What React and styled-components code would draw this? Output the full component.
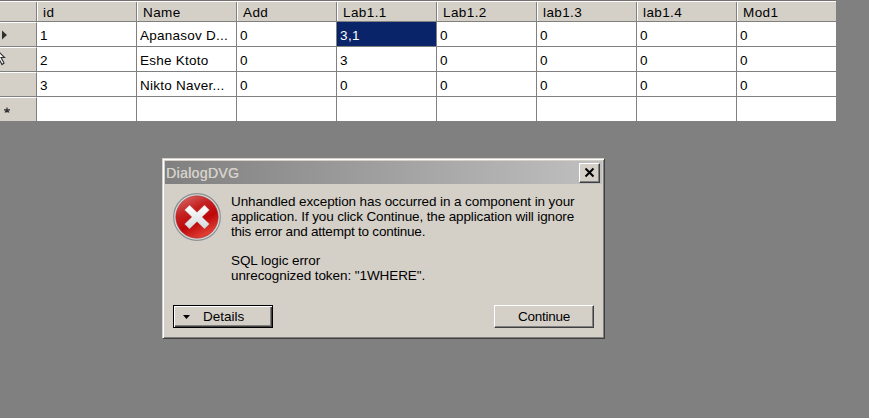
import React from "react";
import styled, { createGlobalStyle } from "styled-components";

const GlobalStyle = createGlobalStyle`
  * { box-sizing: border-box; }
  body { margin: 0; background: #808080; overflow: hidden; }
`;

const Workspace = styled.main`
  width: 869px;
  height: 418px;
  background: #808080;
  color: #000;
  font: 13.5px/15px "Liberation Sans", Arial, sans-serif;
  letter-spacing: 0.4px;
`;

const DataGrid = styled.section`
  width: 836px;
  height: 121px;
  overflow: hidden;
  border-top: 1px solid #77706f;
`;

const HeaderRow = styled.div`
  display: grid;
  grid-template-columns: 37px repeat(8, 100px);
  height: 21px;
  background: #d4d0c8;
  border-top: 1px solid #fff;
  border-bottom: 1px solid #808080;
`;

const HeaderCell = styled.div`
  height: 19px;
  padding: 3px 0 0 5px;
  border-left: 1px solid #fff;
  border-right: 1px solid #808080;
  white-space: nowrap;
`;

const CornerCell = styled(HeaderCell)`
  border-left: 0;
`;

const DataRow = styled.div`
  display: grid;
  grid-template-columns: 37px repeat(8, 100px);
  height: 25px;
`;

const RowHeader = styled.div`
  display: flex;
  align-items: center;
  background: #d4d0c8;
  border-top: 1px solid #fff;
  border-right: 1px solid #808080;
  border-bottom: 1px solid #808080;
`;

const Cell = styled.div`
  padding: 6px 0 0 3px;
  overflow: hidden;
  white-space: nowrap;
  border-right: 1px solid #808080;
  border-bottom: 1px solid #808080;
  background: ${({ $selected }) => ($selected ? "#0a246a" : "#fff")};
  color: ${({ $selected }) => ($selected ? "#fff" : "#000")};
  letter-spacing: ${({ $name }) => ($name ? "0.25px" : "0.4px")};
`;

const Marker = styled.svg`
  display: block;
  width: 14px;
  height: 22px;
`;

const Dialog = styled.section`
  position: absolute;
  left: 162px;
  top: 158px;
  width: 443px;
  height: 181px;
  padding: 2px;
  background: #d4d0c8;
  border: 1px solid;
  border-color: #d4d0c8 #404040 #404040 #d4d0c8;
  box-shadow: inset 1px 1px #fff, inset -1px -1px #808080;
`;

const TitleBar = styled.header`
  display: flex;
  align-items: center;
  justify-content: space-between;
  height: 23px;
  padding: 0 2px 0 1px;
  color: #d4d0c8;
  background: linear-gradient(90deg, #808080, #c0c0c0);
`;

const Title = styled.h1`
  margin: 1px 0 0;
  font: 14px/18px "Liberation Sans", Arial, sans-serif;
  letter-spacing: 0.36px;
  text-shadow: 0.3px 0 #d4d0c8;
`;

const raised = `
  background: #d4d0c8;
  border: 1px solid;
  border-color: #fff #404040 #404040 #fff;
  box-shadow: inset -1px -1px #808080;
`;

const CloseButton = styled.button`
  ${raised}
  width: 21px;
  height: 20px;
  padding: 3px 4px;
`;

const CloseIcon = styled.svg`
  display: block;
  width: 11px;
  height: 11px;
`;

const DialogBody = styled.div`
  display: flex;
  height: 121px;
  padding: 8px 0 0 7px;
`;

const ErrorIcon = styled.svg`
  width: 50px;
  height: 50px;
  flex: none;
`;

const Message = styled.div`
  padding: 2px 0 0 9px;
  white-space: nowrap;
`;

const MessageLine = styled.div`
  height: 15px;
  letter-spacing: ${({ $spacing }) => $spacing || 0}px;
`;

const MessageGap = styled.div`
  height: 14px;
`;

const Actions = styled.footer`
  display: flex;
  justify-content: space-between;
  padding: 0 8px;
`;

const Button = styled.button`
  ${raised}
  display: flex;
  align-items: center;
  justify-content: center;
  width: 100px;
  height: 23px;
  padding: 0;
  color: #000;
  font: 13.5px/15px "Liberation Sans", Arial, sans-serif;
  letter-spacing: -0.25px;
`;

const DetailsButton = styled(Button)`
  justify-content: flex-start;
  padding-left: 9px;
  gap: 13px;
  letter-spacing: 0;
  border-color: #000;
  box-shadow: inset 1px 1px #fff, inset -1px -1px #404040, inset -2px -2px #808080;
`;

const DropArrow = styled.svg`
  width: 7px;
  height: 4px;
`;

const columns = ["id", "Name", "Add", "Lab1.1", "Lab1.2", "lab1.3", "lab1.4", "Mod1"];
const rows = [
  { marker: "current", values: ["1", "Apanasov D...", "0", "3,1", "0", "0", "0", "0"] },
  { marker: "pointer", values: ["2", "Eshe Ktoto", "0", "3", "0", "0", "0", "0"] },
  { values: ["3", "Nikto Naver...", "0", "0", "0", "0", "0", "0"] },
  { marker: "new", values: ["", "", "", "", "", "", "", ""] },
];

function RowMarker({ type }) {
  if (!type) return null;
  return (
    <Marker viewBox="0 0 14 22">
      {type === "current" && <path d="M2 6.5v9l5-4.5z" fill="#303030" />}
      {type === "pointer" && (
        <path d="M-3 1L4.5 8.5H1L4 14L2 15.5L-1 10" fill="#fff" stroke="#333" strokeWidth="1.2" />
      )}
      {type === "new" && (
        <path d="M7 8.5v5M4 10.8h6M5 13.5l2-2.7 2 2.7" fill="none" stroke="#303030" strokeWidth="1.2" />
      )}
    </Marker>
  );
}

export default function App() {
  return (
    <Workspace>
      <GlobalStyle />
      <DataGrid>
        <HeaderRow>
          <CornerCell />
          {columns.map((name) => <HeaderCell key={name}>{name}</HeaderCell>)}
        </HeaderRow>
        {rows.map(({ marker, values }, row) => (
          <DataRow key={row}>
            <RowHeader><RowMarker type={marker} /></RowHeader>
            {values.map((value, column) => (
              <Cell key={column} $name={column === 1} $selected={row === 0 && column === 3}>
                {value}
              </Cell>
            ))}
          </DataRow>
        ))}
      </DataGrid>
      <Dialog role="dialog" aria-labelledby="dialog-title">
        <TitleBar>
          <Title id="dialog-title">DialogDVG</Title>
          <CloseButton aria-label="Close">
            <CloseIcon viewBox="0 0 11 11"><path d="M1.5 1.5l8 8M9.5 1.5l-8 8" stroke="#000" strokeWidth="2" /></CloseIcon>
          </CloseButton>
        </TitleBar>
        <DialogBody>
          <ErrorIcon viewBox="0 0 50 50">
            <defs>
              <linearGradient id="errorRed" x2="0.5" y2="1">
                <stop stopColor="#db7773" />
                <stop offset="0.4" stopColor="#c52222" />
                <stop offset="0.7" stopColor="#bd0709" />
                <stop offset="1" stopColor="#df3c32" />
              </linearGradient>
              <linearGradient id="cross" x2="0" y2="1">
                <stop stopColor="#fff" /><stop offset="1" stopColor="#d5dadb" />
              </linearGradient>
            </defs>
            <circle cx="25" cy="25" r="23.3" fill="#dadddd" stroke="#8b9090" strokeWidth="1.2" />
            <circle cx="25" cy="25" r="21.2" fill="url(#errorRed)" stroke="#a52a2a" strokeWidth="0.6" />
            <path d="M17.5 13l7.5 7.2 7.5-7.2 5 5-7.3 7 7.3 7-5 5L25 29.8 17.5 37l-5-5 7.3-7-7.3-7z" fill="url(#cross)" stroke="#9f4949" strokeWidth="0.4" />
          </ErrorIcon>
          <Message>
            <MessageLine $spacing={-0.1}>Unhandled exception has occurred in a component in your</MessageLine>
            <MessageLine $spacing={-0.13}>application. If you click Continue, the application will ignore</MessageLine>
            <MessageLine $spacing={-0.22}>this error and attempt to continue.</MessageLine>
            <MessageGap />
            <MessageLine $spacing={-0.08}>SQL logic error</MessageLine>
            <MessageLine $spacing={-0.08}>unrecognized token: "1WHERE".</MessageLine>
          </Message>
        </DialogBody>
        <Actions>
          <DetailsButton>
            <DropArrow viewBox="0 0 7 4"><path d="M0 0h7L3.5 4z" /></DropArrow>
            Details
          </DetailsButton>
          <Button>Continue</Button>
        </Actions>
      </Dialog>
    </Workspace>
  );
}
